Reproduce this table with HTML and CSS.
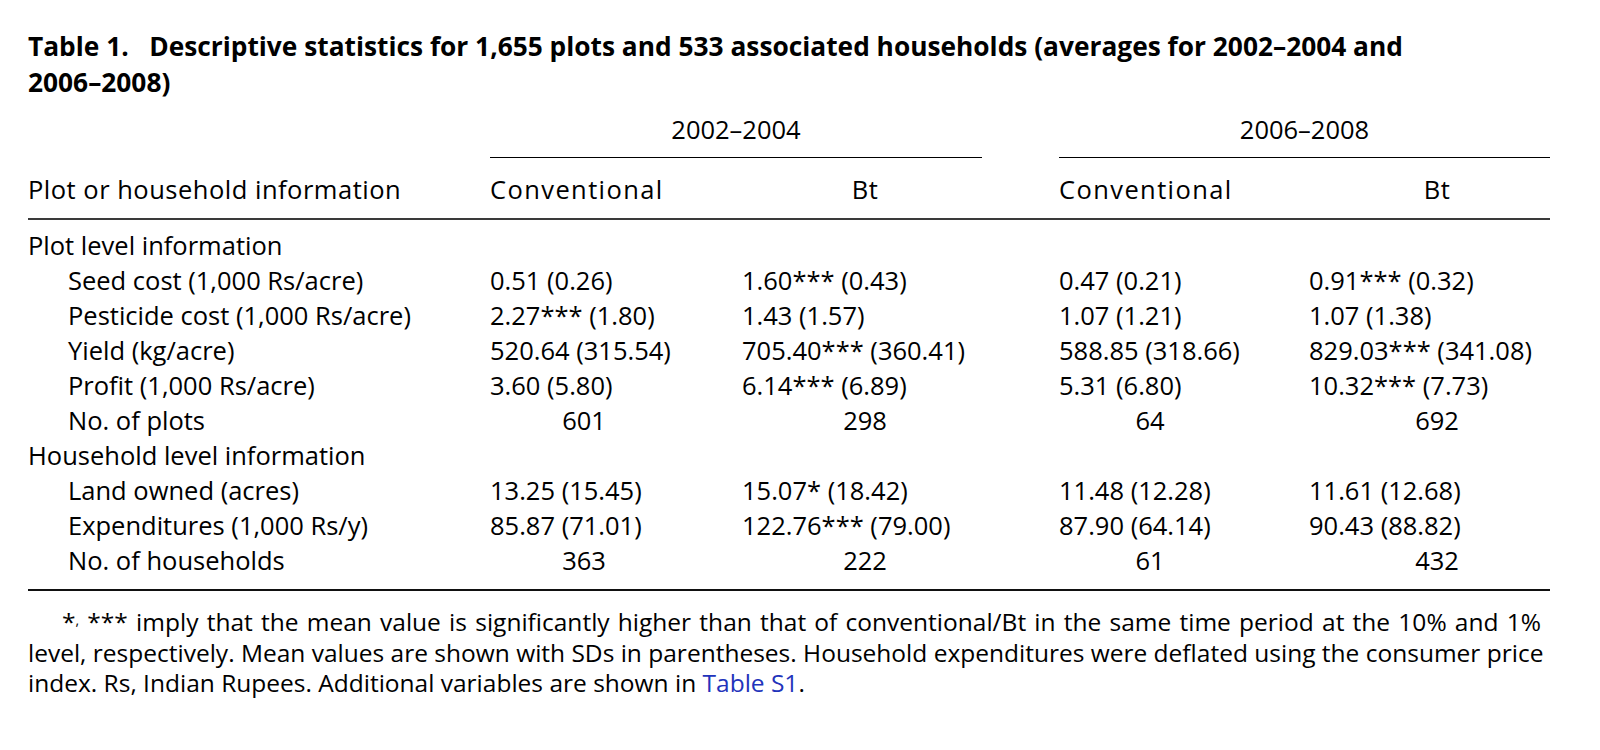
FILE: index.html
```html
<!DOCTYPE html>
<html lang="en">
<head>
<meta charset="utf-8">
<title>Table 1</title>
<link rel="stylesheet" href="styles.css">
</head>
<body>
<div class="page">
  <h1 class="caption">Table 1.&nbsp;&nbsp; Descriptive statistics for 1,655 plots and 533 associated households (averages for 2002–2004 and 2006–2008)</h1>

  <div class="tbl">
    <div class="cell"></div>
    <div class="period p1">2002–2004</div>
    <div class="gap"></div>
    <div class="period p2">2006–2008</div>

    <div class="cell head lab">Plot or household information</div>
    <div class="cell head c1 conv">Conventional</div>
    <div class="cell head c2"><span class="ctr w2">Bt</span></div>
    <div class="gap"></div>
    <div class="cell head c3 conv">Conventional</div>
    <div class="cell head c4"><span class="ctr w4">Bt</span></div>
    <div class="rule mid"></div>

    <div class="cell lab sec first">Plot level information</div>
    <div class="cell first"></div><div class="cell first"></div><div class="gap"></div><div class="cell first"></div><div class="cell first"></div>

    <div class="cell lab sub">Seed cost (1,000 Rs/acre)</div>
    <div class="cell c1">0.51 (0.26)</div>
    <div class="cell c2">1.60*** (0.43)</div>
    <div class="gap"></div>
    <div class="cell c3">0.47 (0.21)</div>
    <div class="cell c4">0.91*** (0.32)</div>

    <div class="cell lab sub">Pesticide cost (1,000 Rs/acre)</div>
    <div class="cell c1">2.27*** (1.80)</div>
    <div class="cell c2">1.43 (1.57)</div>
    <div class="gap"></div>
    <div class="cell c3">1.07 (1.21)</div>
    <div class="cell c4">1.07 (1.38)</div>

    <div class="cell lab sub">Yield (kg/acre)</div>
    <div class="cell c1">520.64 (315.54)</div>
    <div class="cell c2">705.40*** (360.41)</div>
    <div class="gap"></div>
    <div class="cell c3">588.85 (318.66)</div>
    <div class="cell c4">829.03*** (341.08)</div>

    <div class="cell lab sub">Profit (1,000 Rs/acre)</div>
    <div class="cell c1">3.60 (5.80)</div>
    <div class="cell c2">6.14*** (6.89)</div>
    <div class="gap"></div>
    <div class="cell c3">5.31 (6.80)</div>
    <div class="cell c4">10.32*** (7.73)</div>

    <div class="cell lab sub">No. of plots</div>
    <div class="cell c1"><span class="ctr w1">601</span></div>
    <div class="cell c2"><span class="ctr w2">298</span></div>
    <div class="gap"></div>
    <div class="cell c3"><span class="ctr w3">64</span></div>
    <div class="cell c4"><span class="ctr w4">692</span></div>

    <div class="cell lab sec">Household level information</div>
    <div class="cell"></div><div class="cell"></div><div class="gap"></div><div class="cell"></div><div class="cell"></div>

    <div class="cell lab sub">Land owned (acres)</div>
    <div class="cell c1">13.25 (15.45)</div>
    <div class="cell c2">15.07* (18.42)</div>
    <div class="gap"></div>
    <div class="cell c3">11.48 (12.28)</div>
    <div class="cell c4">11.61 (12.68)</div>

    <div class="cell lab sub">Expenditures (1,000 Rs/y)</div>
    <div class="cell c1">85.87 (71.01)</div>
    <div class="cell c2">122.76*** (79.00)</div>
    <div class="gap"></div>
    <div class="cell c3">87.90 (64.14)</div>
    <div class="cell c4">90.43 (88.82)</div>

    <div class="cell lab sub last">No. of households</div>
    <div class="cell c1 last"><span class="ctr w1">363</span></div>
    <div class="cell c2 last"><span class="ctr w2">222</span></div>
    <div class="gap"></div>
    <div class="cell c3 last"><span class="ctr w3">61</span></div>
    <div class="cell c4 last"><span class="ctr w4">432</span></div>
    <div class="rule bottom"></div>
  </div>

  <p class="note">
    <span class="ln j ind"><span class="fn">*<span class="comma">,</span> ***</span> imply that the mean value is significantly higher than that of conventional/Bt in the same time period at the 10% and 1%</span>
    <span class="ln j">level, respectively. Mean values are shown with SDs in parentheses. Household expenditures were deflated using the consumer price</span>
    <span class="ln">index. Rs, Indian Rupees. Additional variables are shown in <a class="link" href="#">Table S1</a>.</span>
  </p>
</div>
</body>
</html>
```

FILE: styles.css
```css
html, body {
  margin: 0;
  padding: 0;
  background: #ffffff;
}

body {
  font-family: "Open Sans", "Noto Sans", "DejaVu Sans", sans-serif;
  color: #000000;
}

.page {
  padding: 28px 0 0 28px;
  width: 1522px;
}

.caption {
  margin: 0;
  font-size: 26.3px;
  line-height: 36px;
  font-weight: 700;
  width: 1420px;
}

.tbl {
  margin-top: 12px;
  display: grid;
  grid-template-columns: 462px 239px 253px 77px 237px 254px;
  font-size: 25.5px;
  line-height: 35px;
}

.cell {
  white-space: nowrap;
}

.period {
  grid-column: span 2;
  text-align: center;
  padding-bottom: 10px;
  border-bottom: 1px solid #000;
}

.head {
  padding-top: 14px;
  padding-bottom: 11px;
  letter-spacing: 0.5px;
}

.head.conv {
  letter-spacing: 1.4px;
}

.rule {
  grid-column: 1 / -1;
  height: 2px;
}

.rule.mid {
  background: #3a3a3a;
}

.rule.bottom {
  background: #111111;
}

.first {
  padding-top: 8px;
}

.last {
  padding-bottom: 11px;
}

.sub {
  padding-left: 40px;
}

.c2, .c4 {
  padding-left: 13px;
}

.ctr {
  display: inline-block;
  text-align: center;
}

.w1 { width: 188px; }
.w2 { width: 246px; }
.w3 { width: 182px; }
.w4 { width: 256px; }

.note {
  margin: 14px 0 0 0;
  width: 1513px;
  font-size: 24.5px;
  line-height: 30.5px;
}

.ln {
  display: block;
  white-space: nowrap;
}

.ln.j {
  text-align: justify;
  text-align-last: justify;
}

.ln.ind {
  padding-left: 34px;
}

.comma {
  font-size: 14px;
  vertical-align: 6px;
}

.link {
  color: #2233bb;
  text-decoration: none;
}
```
